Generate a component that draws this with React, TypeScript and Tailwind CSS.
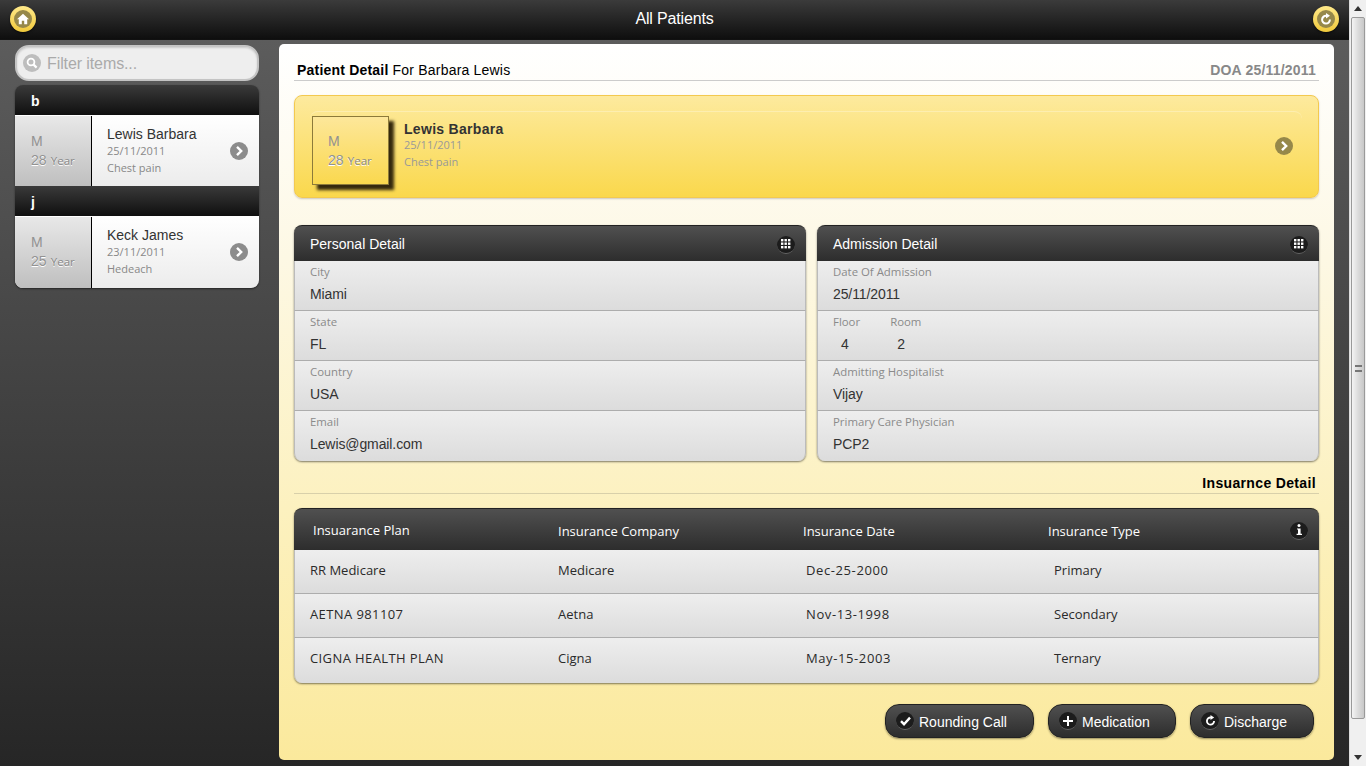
import React from "react";

const arial = "font-['Liberation_Sans',Arial,sans-serif]";
const segoe = "font-['Open_Sans',sans-serif]";

function Chevron({ bg }: { bg: string }) {
  return (
    <svg width="18" height="18" viewBox="0 0 18 18" className="shrink-0">
      <circle cx="9" cy="9" r="9" fill={bg} />
      <path d="M7 4.8 11.2 9 7 13.2" fill="none" stroke="#fff" strokeWidth="2.4" />
    </svg>
  );
}

function Refresh({ color, size = 12 }: { color: string; size?: number }) {
  return (
    <svg width={size} height={size} viewBox="0 0 12 12">
      <path d="M6.5 2.8A3.9 3.9 0 1 0 9.9 6.6" fill="none" stroke={color} strokeWidth="2" />
      <path d="M6 0 10 2.7 6 5.4Z" fill={color} />
    </svg>
  );
}

function GoldButton({ children }: { children: React.ReactNode }) {
  return (
    <div className="w-[26px] h-[26px] rounded-full bg-[linear-gradient(#ffe98a,#f0c93c)] flex items-center justify-center shadow-[0_1px_2px_rgba(0,0,0,0.6)]">
      <div className="w-[18px] h-[18px] rounded-full bg-[#96884a] flex items-center justify-center">{children}</div>
    </div>
  );
}

function DarkDot({ children }: { children: React.ReactNode }) {
  return (
    <div className="w-[18px] h-[18px] rounded-full bg-[#1c1c1c] border-b border-[#666] flex items-center justify-center shrink-0">
      {children}
    </div>
  );
}

function Grid() {
  return (
    <svg width="10" height="10" viewBox="0 0 10 10" fill="#fff">
      {[0, 3.5, 7].map((x) => [0, 3.5, 7].map((y) => <rect key={`${x}-${y}`} x={x} y={y} width="2.4" height="2.4" />))}
    </svg>
  );
}

function AgeBox({ age, inCard }: { age: string; inCard?: boolean }) {
  return (
    <div className={`${inCard ? "pl-[15px] pt-[16px]" : "pl-[16px] pt-[17px]"} text-[#929292]`}>
      <div className={`${arial} text-[14px] leading-[17px]`}>M</div>
      <div className="leading-[18px] whitespace-nowrap [text-shadow:0_1px_0_#fff]">
        <span className={`${arial} text-[14px]`}>{age}</span>{" "}
        <span className={`${segoe} text-[11.5px] text-[#888]`}>Year</span>
      </div>
    </div>
  );
}

function SideRow({ name, date, desc, age, last }: { name: string; date: string; desc: string; age: string; last?: boolean }) {
  return (
    <div className={`flex pt-[1px] bg-[linear-gradient(#ffffff,#ececec)] ${last ? "rounded-b-[8px] h-[72px]" : "h-[71px]"}`}>
      <div className={`w-[77px] shrink-0 bg-[linear-gradient(#e8e8e8,#bfbfbf)] border-r-[1.5px] border-black ${last ? "rounded-bl-[8px]" : ""}`}>
        <AgeBox age={age} />
      </div>
      <div className="flex-1 pl-[15px] pt-[10px]">
        <div className={`${arial} text-[14px] leading-[16px] text-[#333]`}>{name}</div>
        <div className={`${segoe} text-[11px] leading-[17px] text-[#888]`}>{date}</div>
        <div className={`${segoe} text-[11px] leading-[17px] text-[#888]`}>{desc}</div>
      </div>
      <div className="pr-[11px] pt-[26px]">
        <Chevron bg="#8c8c8c" />
      </div>
    </div>
  );
}

function SideHead({ label, round }: { label: string; round?: boolean }) {
  return (
    <div className={`h-[30px] pt-[2px] bg-[linear-gradient(#3a3a3a,#0f0f0f)] pl-[16px] flex items-center text-white font-bold text-[14px] ${arial} ${round ? "rounded-t-[8px]" : ""}`}>
      {label}
    </div>
  );
}

function Field({ label, value, className = "" }: { label: string; value: string; className?: string }) {
  return (
    <div className={className}>
      <div className={`${segoe} text-[11.4px] leading-[14px] pt-[4px] text-[#8a8a8a] whitespace-nowrap`}>{label}</div>
      <div className={`${arial} text-[14px] tracking-[-0.1px] leading-[16px] pt-[7px] text-[#333]`}>{value}</div>
    </div>
  );
}

function DetailCard({ title, rows, className = "" }: { title: string; rows: React.ReactNode[]; className?: string }) {
  return (
    <div className={`rounded-[8px] shadow-[0_1px_2px_rgba(0,0,0,0.5)] ${className}`}>
      <div className="h-[36px] pt-[2px] rounded-t-[8px] border-t border-[#222] bg-[linear-gradient(#505050,#2d2d2d)] flex items-center justify-between pl-[16px] pr-[11px]">
        <span className={`${arial} text-white text-[14px]`}>{title}</span>
        <DarkDot>
          <Grid />
        </DarkDot>
      </div>
      {rows.map((r, i) => (
        <div
          key={i}
          className={`h-[50px] px-[15px] border-x border-[#bbb] bg-[linear-gradient(#eeeeee,#dcdcdc)] ${i === rows.length - 1 ? "rounded-b-[8px]" : "border-b border-b-[#adadad]"}`}
        >
          {r}
        </div>
      ))}
    </div>
  );
}

function TableRow({ cells, last }: { cells: { text: string; className?: string }[]; last?: boolean }) {
  return (
    <div className={`flex items-center border-x border-[#bbb] bg-[linear-gradient(#eeeeee,#dcdcdc)] ${segoe} text-[13px] text-[#2a2a2a] ${last ? "h-[45px] pb-[3px] rounded-b-[8px]" : "h-[44px] pb-[2px] border-b border-b-[#adadad]"}`}>
      <div className={`w-[263px] pl-[15px] ${cells[0].className ?? ""}`}>{cells[0].text}</div>
      {cells.slice(1).map((c, i) => (
        <div key={i} className={`w-[248px] ${c.className ?? ""}`}>
          {c.text}
        </div>
      ))}
    </div>
  );
}

function ActionButton({ icon, label, className = "" }: { icon: React.ReactNode; label: string; className?: string }) {
  return (
    <div className={`h-[34px] rounded-[14px] border border-[#222] bg-[linear-gradient(#505050,#2d2d2d)] shadow-[0_1px_2px_rgba(0,0,0,0.4)] flex items-center pl-[10px] gap-[5px] ${className}`}>
      <DarkDot>{icon}</DarkDot>
      <span className={`${arial} text-white text-[14px] pt-[2px] whitespace-nowrap`}>{label}</span>
    </div>
  );
}

const dateCls = "tracking-[0.6px]";
const capsCls = "tracking-[0.4px]";

export default function App() {
  return (
    <div className="w-[1366px] h-[766px] overflow-hidden flex">
      <div className="w-[1349px] h-full flex flex-col bg-[#333]">
        <header className="h-[40px] shrink-0 bg-[linear-gradient(#3b3b3b,#0e0e0e)] border-b border-[#111] flex items-center justify-between px-[10px] pb-[2px]">
          <GoldButton>
            <svg width="12" height="12" viewBox="0 0 12 12" fill="#fff">
              <path d="M6 .8 0 6.2h1.8V11.2h3V7.8h2.4v3.4h3V6.2H12Z" />
            </svg>
          </GoldButton>
          <div className={`${arial} text-white text-[16px] tracking-[-0.15px]`}>All Patients</div>
          <GoldButton>
            <Refresh color="#fff" />
          </GoldButton>
        </header>

        <div className="flex-1 flex bg-[linear-gradient(#5c5c5c,#262626)]">
          <aside className="w-[279px] shrink-0 pl-[15px] pr-[20px] pt-[5px]">
            <div className="h-[36px] rounded-[14px] bg-[#eeeeee] border-2 border-[#c4c4c4] shadow-[inset_0_1px_2px_rgba(0,0,0,0.15)] flex items-center pl-[6px] gap-[6px]">
              <svg width="18" height="18" viewBox="0 0 18 18">
                <circle cx="9" cy="9" r="9" fill="#bdbdbd" />
                <circle cx="8" cy="8" r="3.4" fill="none" stroke="#fff" strokeWidth="1.8" />
                <path d="M10.6 10.6 13.6 13.6" stroke="#fff" strokeWidth="2.2" />
              </svg>
              <span className={`${arial} text-[16px] tracking-[-0.1px] pt-[2px] text-[#aaa]`}>Filter items...</span>
            </div>
            <div className="mt-[4px] rounded-[8px] shadow-[0_1px_2px_rgba(0,0,0,0.5)]">
              <SideHead label="b" round />
              <SideRow name="Lewis Barbara" date="25/11/2011" desc="Chest pain" age="28" />
              <SideHead label="j" />
              <SideRow name="Keck James" date="23/11/2011" desc="Hedeach" age="25" last />
            </div>
          </aside>

          <main className="w-[1055px] h-[716px] mt-[4px] rounded-[5px] bg-[linear-gradient(#ffffff,#fdf8e4_30%,#fcf1bf_65%,#fbe99c)] px-[15px] pt-[17px]">
            <div className="h-[20px] border-b border-[#ccc] flex justify-between items-start px-[3px] leading-[18px]">
              <div className={`${arial} text-[14px] tracking-[0.2px] text-black`}>
                <b>Patient Detail</b> For Barbara Lewis
              </div>
              <div className={`${arial} text-[14px] tracking-[0.2px] font-bold text-[#888]`}>DOA 25/11/2011</div>
            </div>

            <div className="mt-[14px] h-[103px] rounded-[8px] border border-[#f3c94f] bg-[linear-gradient(#fdea9e,#fad84c)] shadow-[0_1px_2px_rgba(0,0,0,0.2)] pl-[17px] pr-[16px] pt-[15px]">
              <div className="flex items-start rounded-t-[8px] border-t border-[#fdeeb0] pt-[4px] pr-[9px] -ml-[2px] pl-[2px]">
                <div className="w-[77px] h-[69px] shrink-0 border border-[#8c7a3a] bg-[linear-gradient(#fde79a,#fad84e)] shadow-[5px_5px_3px_#35290e]">
                  <AgeBox age="28" inCard />
                </div>
                <div className="pl-[15px] pt-[5px] flex-1">
                  <div className={`${arial} text-[14px] tracking-[0.3px] font-bold leading-[16px] text-[#333]`}>Lewis Barbara</div>
                  <div className={`${segoe} text-[11px] leading-[16px] text-[#999]`}>25/11/2011</div>
                  <div className={`${segoe} text-[11px] leading-[18px] text-[#999]`}>Chest pain</div>
                </div>
                <div className="pt-[21px]">
                  <Chevron bg="#96884a" />
                </div>
              </div>
            </div>

            <div className="mt-[27px] flex gap-[11px]">
              <DetailCard
                title="Personal Detail"
                className="w-[512px]"
                rows={[
                  <Field label="City" value="Miami" />,
                  <Field label="State" value="FL" />,
                  <Field label="Country" value="USA" />,
                  <Field label="Email" value="Lewis@gmail.com" />,
                ]}
              />
              <DetailCard
                title="Admission Detail"
                className="w-[502px]"
                rows={[
                  <Field label="Date Of Admission" value="25/11/2011" />,
                  <div className="flex gap-[30px]">
                    <div>
                      <Field label="Floor" value="" />
                      <div className={`${arial} text-[14px] leading-[16px] pl-[8px] text-[#333]`}>4</div>
                    </div>
                    <div>
                      <Field label="Room" value="" />
                      <div className={`${arial} text-[14px] leading-[16px] pl-[7px] text-[#333]`}>2</div>
                    </div>
                  </div>,
                  <Field label="Admitting Hospitalist" value="Vijay" />,
                  <Field label="Primary Care Physician" value="PCP2" />,
                ]}
              />
            </div>

            <div className={`mt-[14px] h-[19px] border-b border-[#d8d0aa] text-right pr-[3px] ${arial} text-[14px] tracking-[0.35px] font-bold text-black leading-[17px]`}>
              Insuarnce Detail
            </div>

            <div className="mt-[14px] rounded-[8px] shadow-[0_1px_2px_rgba(0,0,0,0.5)]">
              <div className={`h-[42px] rounded-t-[8px] border-t border-[#222] bg-[linear-gradient(#505050,#2d2d2d)] flex items-center ${segoe} text-[13px] text-white`}>
                <div className="w-[264px] pl-[19px] pt-[3px]">Insuarance Plan</div>
                <div className="w-[245px] pt-[5px]">Insurance Company</div>
                <div className="w-[245px] pt-[5px]">Insurance Date</div>
                <div className="flex-1 pt-[5px]">Insurance Type</div>
                <div className="pr-[11px] pt-[2px]">
                  <DarkDot>
                    <svg width="10" height="12" viewBox="0 0 10 12" fill="#fff">
                      <circle cx="5" cy="1.6" r="1.5" />
                      <path d="M3 4.4h3.6v5.4H8V11H2.6V9.8H4V5.6H3Z" />
                    </svg>
                  </DarkDot>
                </div>
              </div>
              <TableRow cells={[{ text: "RR Medicare" }, { text: "Medicare" }, { text: "Dec-25-2000", className: dateCls }, { text: "Primary" }]} />
              <TableRow cells={[{ text: "AETNA 981107", className: capsCls }, { text: "Aetna" }, { text: "Nov-13-1998", className: dateCls }, { text: "Secondary" }]} />
              <TableRow last cells={[{ text: "CIGNA HEALTH PLAN", className: capsCls }, { text: "Cigna" }, { text: "May-15-2003", className: dateCls }, { text: "Ternary" }]} />
            </div>

            <div className="mt-[21px] flex justify-end gap-[14px] pr-[5px]">
              <ActionButton
                className="w-[149px]"
                label="Rounding Call"
                icon={
                  <svg width="11" height="10" viewBox="0 0 11 10">
                    <path d="M1 5.2 4 8.2 10 1.6" fill="none" stroke="#fff" strokeWidth="2.4" />
                  </svg>
                }
              />
              <ActionButton
                className="w-[128px]"
                label="Medication"
                icon={
                  <svg width="10" height="10" viewBox="0 0 10 10" fill="#fff">
                    <path d="M4 0h2v4h4v2H6v4H4V6H0V4h4Z" />
                  </svg>
                }
              />
              <ActionButton className="w-[124px]" label="Discharge" icon={<Refresh color="#fff" size={11} />} />
            </div>
          </main>
        </div>
      </div>

      <div className="w-[17px] h-full flex flex-col items-stretch bg-[#f0f0f0] border-l border-[#ddd]">
        <div className="h-[17px] flex items-center justify-center">
          <svg width="8" height="5" viewBox="0 0 8 5">
            <path d="M4 0 8 5H0Z" fill="#333" />
          </svg>
        </div>
        <div className="h-[702px] mx-px rounded-[2px] border border-[#9a9a9a] bg-[linear-gradient(90deg,#f4f4f4,#dcdcdc_50%,#c8c8c8)] flex items-center justify-center">
          <div className="w-[7px] h-[7px] border-y-2 border-[#777]" />
        </div>
        <div className="flex-1 flex items-end justify-center pb-[6px]">
          <svg width="8" height="5" viewBox="0 0 8 5">
            <path d="M4 5 8 0H0Z" fill="#333" />
          </svg>
        </div>
      </div>
    </div>
  );
}
